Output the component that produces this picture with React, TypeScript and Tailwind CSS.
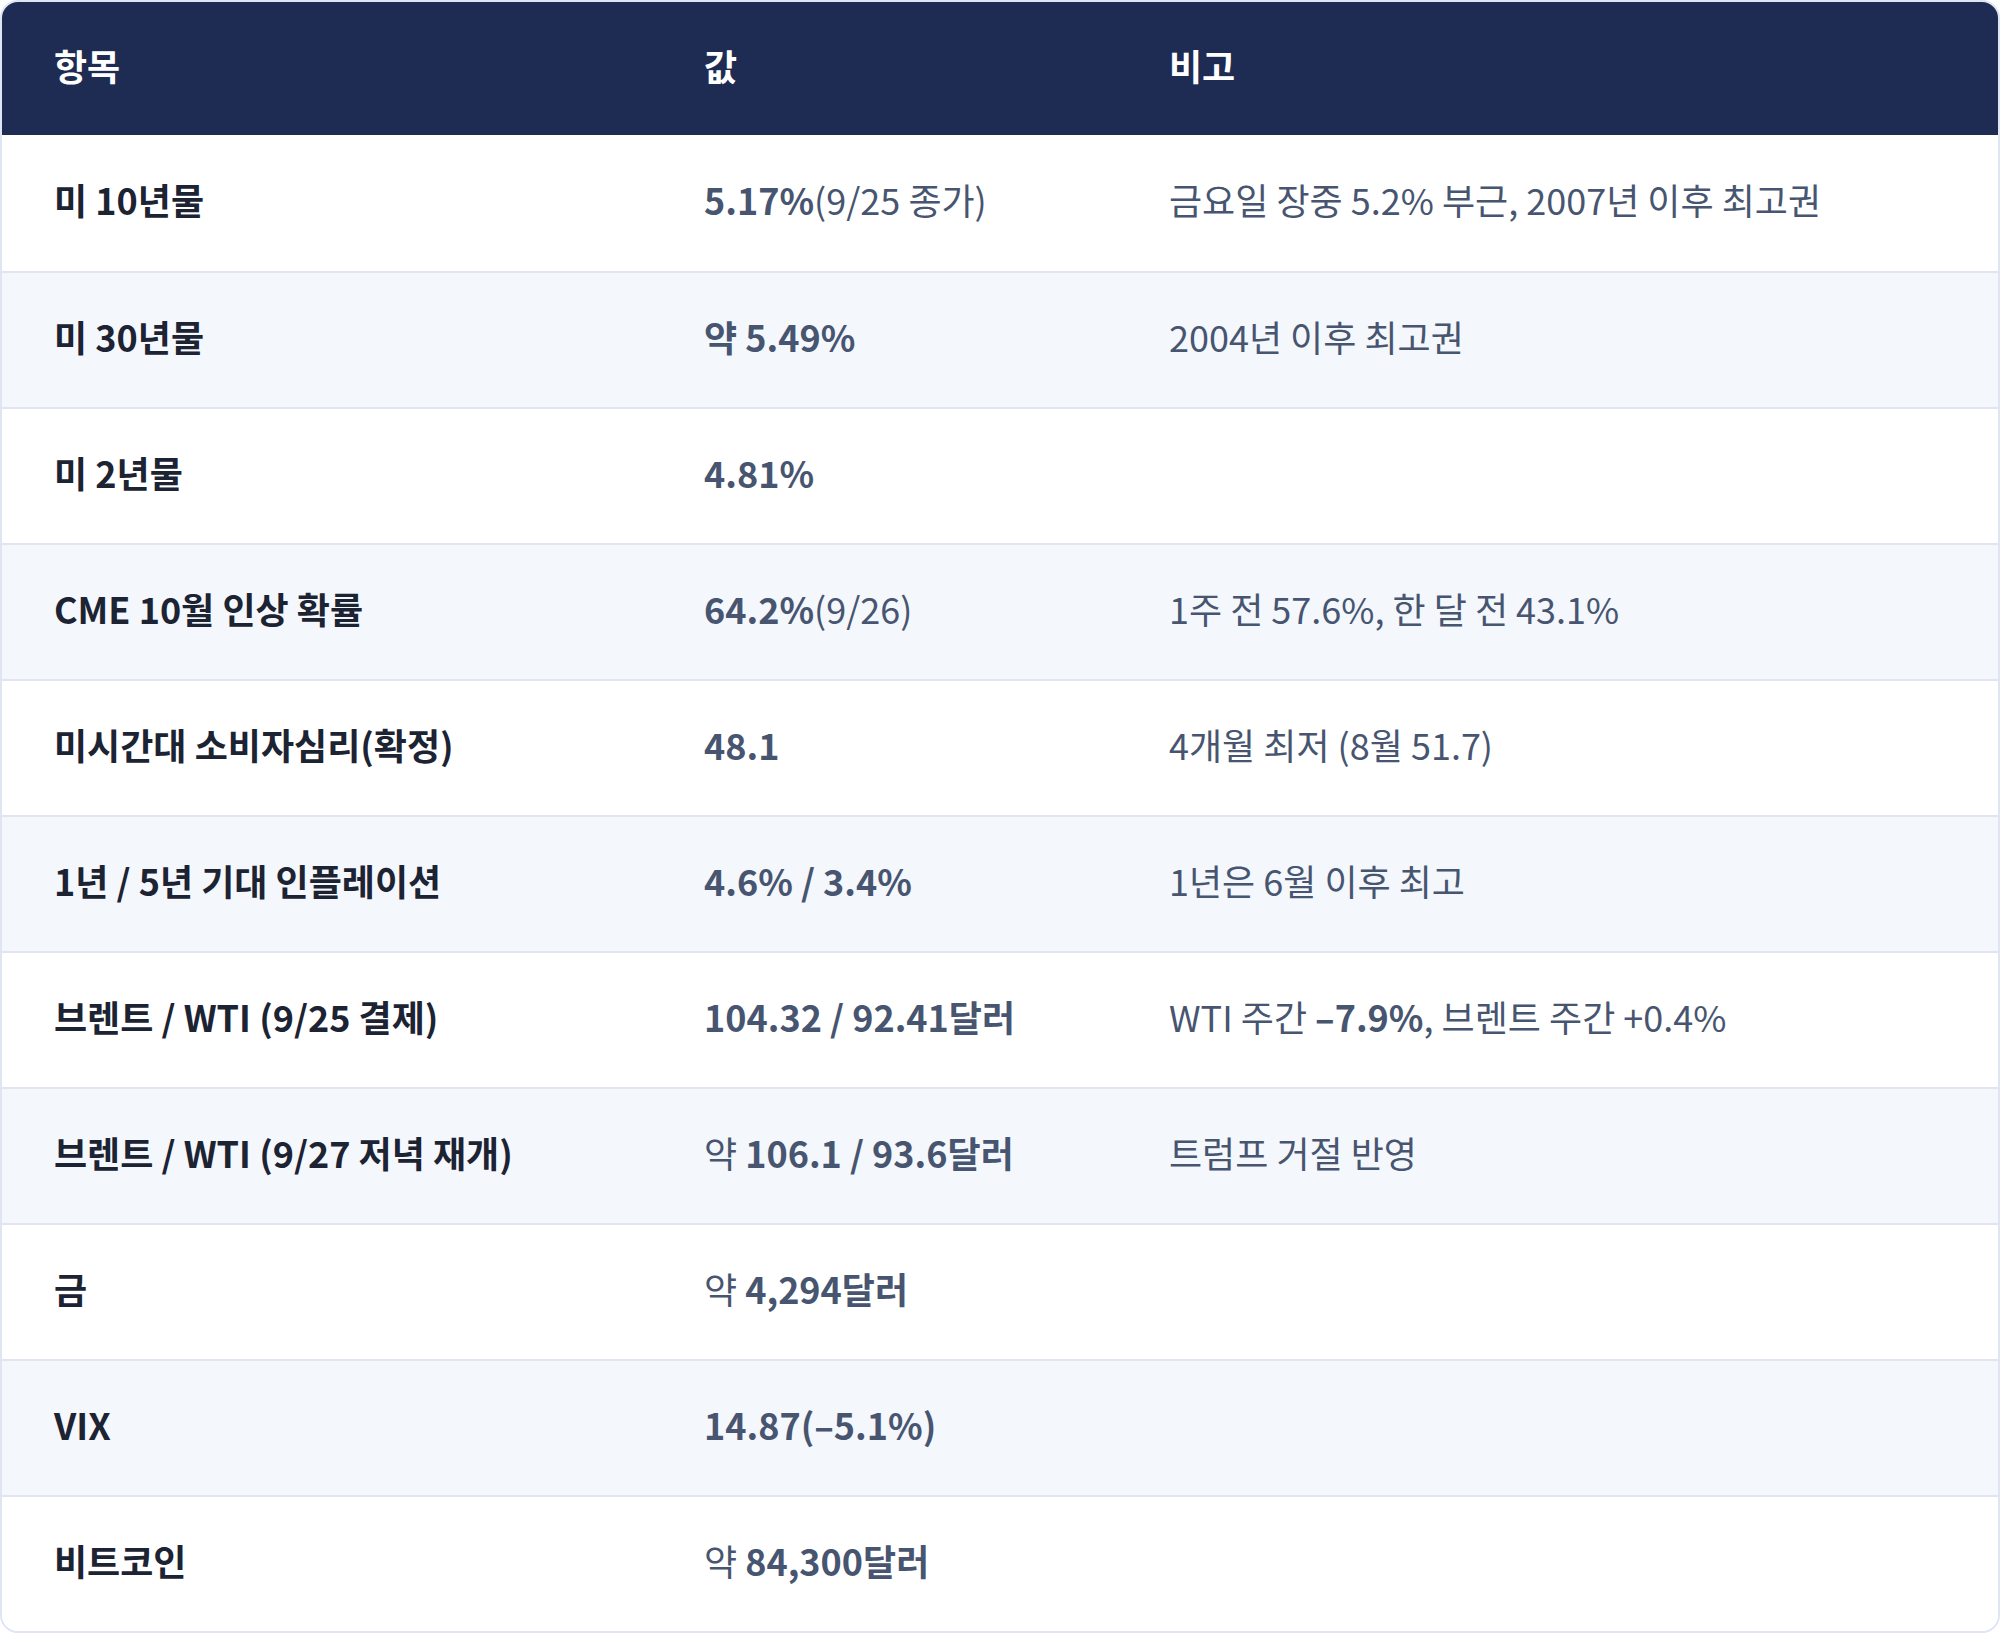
import React from 'react';

type Part = { t: string; b?: boolean };
type Row = { name: string; value: Part[]; note: Part[] };

const rows: Row[] = [
  { name: '미 10년물', value: [{ t: '5.17%', b: true }, { t: '(9/25 종가)' }], note: [{ t: '금요일 장중 5.2% 부근, 2007년 이후 최고권' }] },
  { name: '미 30년물', value: [{ t: '약 5.49%', b: true }], note: [{ t: '2004년 이후 최고권' }] },
  { name: '미 2년물', value: [{ t: '4.81%', b: true }], note: [] },
  { name: 'CME 10월 인상 확률', value: [{ t: '64.2%', b: true }, { t: '(9/26)' }], note: [{ t: '1주 전 57.6%, 한 달 전 43.1%' }] },
  { name: '미시간대 소비자심리(확정)', value: [{ t: '48.1', b: true }], note: [{ t: '4개월 최저 (8월 51.7)' }] },
  { name: '1년 / 5년 기대 인플레이션', value: [{ t: '4.6% / 3.4%', b: true }], note: [{ t: '1년은 6월 이후 최고' }] },
  { name: '브렌트 / WTI (9/25 결제)', value: [{ t: '104.32 / 92.41달러', b: true }], note: [{ t: 'WTI 주간 ' }, { t: '–7.9%', b: true }, { t: ', 브렌트 주간 +0.4%' }] },
  { name: '브렌트 / WTI (9/27 저녁 재개)', value: [{ t: '약 ' }, { t: '106.1 / 93.6달러', b: true }], note: [{ t: '트럼프 거절 반영' }] },
  { name: '금', value: [{ t: '약 ' }, { t: '4,294달러', b: true }], note: [] },
  { name: 'VIX', value: [{ t: '14.87(–5.1%)', b: true }], note: [] },
  { name: '비트코인', value: [{ t: '약 ' }, { t: '84,300달러', b: true }], note: [] },
];

function Text({ parts }: { parts: Part[] }) {
  return (
    <>
      {parts.map((p, i) => (
        <span key={i} className={p.b ? 'font-bold' : 'font-normal'}>
          {p.t}
        </span>
      ))}
    </>
  );
}

export default function App() {
  return (
    <div className="min-h-screen bg-white font-['Noto_Sans_CJK_KR','Noto_Sans',sans-serif]">
      <div className="overflow-hidden rounded-[18px] border-2 border-[#dfe6f1]">
        {/* header */}
        <div className="grid h-[133px] grid-cols-[650px_465px_1fr] items-center bg-[#1e2b53] pb-[8px] text-[36px] leading-none font-bold text-white">
          <div className="pl-[52px]">항목</div>
          <div className="pl-[52px]">값</div>
          <div className="pl-[52px]">비고</div>
        </div>

        {rows.map((r, i) => (
          <div
            key={i}
            className={`grid h-[136px] grid-cols-[650px_465px_1fr] items-center pb-[8px] text-[36px] leading-none ${
              i > 0 ? 'border-t-2 border-[#dfe6f1]' : ''
            } ${i % 2 === 1 ? 'bg-[#f4f7fc]' : 'bg-white'}`}
          >
            <div className="pl-[52px] font-bold text-[#1c2333]">{r.name}</div>
            <div className="whitespace-nowrap pl-[52px] text-[#475570]">
              <Text parts={r.value} />
            </div>
            <div className="whitespace-nowrap pl-[52px] text-[#475570]">
              <Text parts={r.note} />
            </div>
          </div>
        ))}
      </div>
    </div>
  );
}
